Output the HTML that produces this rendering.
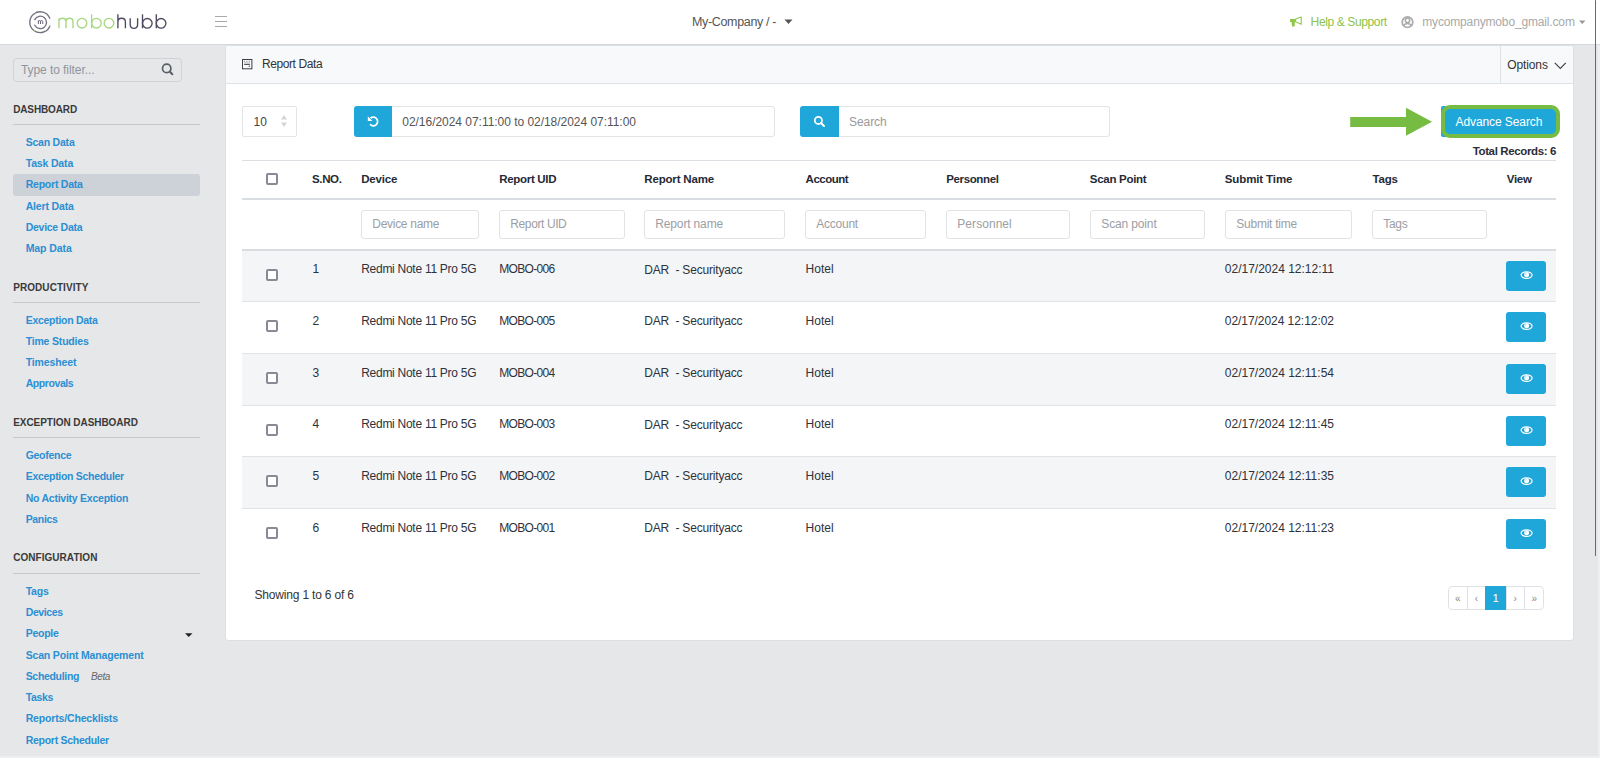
<!DOCTYPE html>
<html><head><meta charset="utf-8"><style>
*{box-sizing:border-box;margin:0;padding:0}
html,body{width:1600px;height:758px;overflow:hidden}
body{font-family:"Liberation Sans",sans-serif;background:#e6e7e9;position:relative;color:#333}
.a,.t{position:absolute}
.t{white-space:nowrap}
svg{position:absolute;overflow:visible}
</style></head><body>
<div class="a" style="left:0px;top:0px;width:1600px;height:44px;background:#fff"></div>
<div class="a" style="left:0px;top:44px;width:1600px;height:1px;background:#d5d8dd"></div>
<svg style="left:0;top:0" width="200" height="44" viewBox="0 0 200 44">
<g fill="none" stroke="#756e80" stroke-width="1.35" stroke-linecap="round">
<path d="M49.8 18.2 A10.4 10.4 0 1 0 49.8 26.2"/>
<path d="M34.8 19.6 A6.2 6.2 0 1 1 34.8 25.2"/>
</g>
<path d="M38.4 24 V20.6 M38.4 21.6 Q38.4 20.6 39.4 20.6 Q40.5 20.6 40.5 21.6 V24 M40.5 21.6 Q40.5 20.6 41.6 20.6 Q42.7 20.6 42.7 21.6 V24" fill="none" stroke="#5f5869" stroke-width="0.9"/>
<g fill="#a6d87f"><circle cx="35.5" cy="13.8" r="0.8"/><circle cx="34.8" cy="30.5" r="0.8"/><circle cx="45.3" cy="30.5" r="0.8"/></g>
<g fill="none" stroke="#a5d880" stroke-width="1.35" stroke-linecap="butt">
<path d="M59 28.3 V18.2 M59 21.8 Q59 18.2 62.5 18.2 Q66 18.2 66 21.8 V28.3 M66 21.8 Q66 18.2 69.5 18.2 Q73 18.2 73 21.8 V28.3"/>
<circle cx="82" cy="23.2" r="4.8"/>
<path d="M91.6 14.3 V28.3"/><circle cx="96.4" cy="23.2" r="4.8"/>
<circle cx="109" cy="23.2" r="4.8"/>
</g>
<g fill="none" stroke="#4f4860" stroke-width="1.35">
<path d="M117.9 14.3 V28.3 M117.9 22 Q117.9 18.2 121.6 18.2 Q125.4 18.2 125.4 22 V28.3"/>
<path d="M130.2 18.2 V24.6 Q130.2 28.4 133.9 28.4 Q137.6 28.4 137.6 24.6 V18.2"/>
<path d="M142.5 14.3 V28.3"/><circle cx="147.3" cy="23.3" r="4.8"/>
<path d="M156.3 14.3 V28.3"/><circle cx="161.1" cy="23.3" r="4.8"/>
</g>
</svg>
<div class="a" style="left:214.5px;top:16px;width:12px;height:1.2px;background:#a9a9ad"></div>
<div class="a" style="left:214.5px;top:21px;width:12px;height:1.2px;background:#a9a9ad"></div>
<div class="a" style="left:214.5px;top:26px;width:12px;height:1.2px;background:#a9a9ad"></div>
<div class="t" style="left:692px;top:16.00px;font-size:12.5px;line-height:12.5px;color:#555;font-weight:normal;letter-spacing:-0.342px;">My-Company / -</div>
<svg style="left:784px;top:19px" width="10" height="6"><path d="M0.5 0.5 H8.5 L4.5 5 Z" fill="#555"/></svg>
<svg style="left:1289px;top:16px" width="14" height="12" viewBox="0 0 14 12"><path d="M1 2.9 H6.4 V6 H5.9 L5.6 10.5 H3 L2.5 6 H1 Z" fill="#92c74e"/><path d="M6.6 3.1 L12.2 1 V8.2 L6.6 5.8 Z" fill="none" stroke="#92c74e" stroke-width="1.1" stroke-linejoin="round"/></svg>
<div class="t" style="left:1310.6px;top:16.00px;font-size:12px;line-height:12px;color:#8cc34b;font-weight:normal;letter-spacing:-0.373px;">Help &amp; Support</div>
<svg style="left:1401px;top:15.5px" width="13" height="13" viewBox="0 0 13 13"><circle cx="6.5" cy="6.2" r="5.3" fill="none" stroke="#ababab" stroke-width="1.7"/><circle cx="6.5" cy="4.5" r="2.2" fill="none" stroke="#ababab" stroke-width="1.5"/><path d="M2.6 9.6 Q3.6 7.4 6.5 7.4 Q9.4 7.4 10.4 9.6" fill="none" stroke="#ababab" stroke-width="1.5"/></svg>
<div class="t" style="left:1422.2px;top:16.00px;font-size:12px;line-height:12px;color:#a9a9a9;font-weight:normal;letter-spacing:-0.153px;">mycompanymobo_gmail.com</div>
<svg style="left:1579px;top:19.5px" width="7" height="5"><path d="M0 0.5 H6.5 L3.25 4 Z" fill="#999"/></svg>
<div class="a" style="left:13px;top:58px;width:169px;height:24px;background:#e6e7e9;border:1px solid #cfd2d6;border-radius:4px"></div>
<div class="t" style="left:21px;top:64.00px;font-size:12px;line-height:12px;color:#8f959e;font-weight:normal;letter-spacing:-0.073px;">Type to filter...</div>
<svg style="left:161px;top:63px" width="14" height="14" viewBox="0 0 14 14"><circle cx="5.7" cy="5.4" r="4.2" fill="none" stroke="#5a5e66" stroke-width="1.7"/><path d="M8.7 8.5 L11.3 11.2" stroke="#5a5e66" stroke-width="2" stroke-linecap="round"/></svg>
<div class="t" style="left:13.2px;top:105.00px;font-size:10px;line-height:10px;color:#3a3a3a;font-weight:bold;letter-spacing:-0.135px;">DASHBOARD</div>
<div class="a" style="left:13px;top:124px;width:187px;height:1px;background:#c5c8cd"></div>
<div class="a" style="left:13px;top:174px;width:187px;height:22px;background:#cdd1d8;border-radius:3px"></div>
<div class="t" style="left:25.7px;top:137.00px;font-size:10.5px;line-height:10.5px;color:#2b8fd2;font-weight:bold;letter-spacing:-0.217px;">Scan Data</div>
<div class="t" style="left:25.7px;top:158.00px;font-size:10.5px;line-height:10.5px;color:#2b8fd2;font-weight:bold;letter-spacing:-0.161px;">Task Data</div>
<div class="t" style="left:25.7px;top:179.00px;font-size:10.5px;line-height:10.5px;color:#2b8fd2;font-weight:bold;letter-spacing:-0.227px;">Report Data</div>
<div class="t" style="left:25.7px;top:201.00px;font-size:10.5px;line-height:10.5px;color:#2b8fd2;font-weight:bold;letter-spacing:-0.162px;">Alert Data</div>
<div class="t" style="left:25.7px;top:222.00px;font-size:10.5px;line-height:10.5px;color:#2b8fd2;font-weight:bold;letter-spacing:-0.269px;">Device Data</div>
<div class="t" style="left:25.7px;top:243.00px;font-size:10.5px;line-height:10.5px;color:#2b8fd2;font-weight:bold;letter-spacing:-0.091px;">Map Data</div>
<div class="t" style="left:13.2px;top:283.00px;font-size:10px;line-height:10px;color:#3a3a3a;font-weight:bold;letter-spacing:0.066px;">PRODUCTIVITY</div>
<div class="a" style="left:13px;top:302px;width:187px;height:1px;background:#c5c8cd"></div>
<div class="t" style="left:25.7px;top:315.00px;font-size:10.5px;line-height:10.5px;color:#2b8fd2;font-weight:bold;letter-spacing:-0.278px;">Exception Data</div>
<div class="t" style="left:25.7px;top:336.00px;font-size:10.5px;line-height:10.5px;color:#2b8fd2;font-weight:bold;letter-spacing:-0.184px;">Time Studies</div>
<div class="t" style="left:25.7px;top:357.00px;font-size:10.5px;line-height:10.5px;color:#2b8fd2;font-weight:bold;letter-spacing:-0.119px;">Timesheet</div>
<div class="t" style="left:25.7px;top:378.00px;font-size:10.5px;line-height:10.5px;color:#2b8fd2;font-weight:bold;letter-spacing:-0.426px;">Approvals</div>
<div class="t" style="left:13.2px;top:418.00px;font-size:10px;line-height:10px;color:#3a3a3a;font-weight:bold;letter-spacing:-0.047px;">EXCEPTION DASHBOARD</div>
<div class="a" style="left:13px;top:437px;width:187px;height:1px;background:#c5c8cd"></div>
<div class="t" style="left:25.7px;top:450.00px;font-size:10.5px;line-height:10.5px;color:#2b8fd2;font-weight:bold;letter-spacing:-0.287px;">Geofence</div>
<div class="t" style="left:25.7px;top:471.00px;font-size:10.5px;line-height:10.5px;color:#2b8fd2;font-weight:bold;letter-spacing:-0.299px;">Exception Scheduler</div>
<div class="t" style="left:25.7px;top:493.00px;font-size:10.5px;line-height:10.5px;color:#2b8fd2;font-weight:bold;letter-spacing:-0.246px;">No Activity Exception</div>
<div class="t" style="left:25.7px;top:514.00px;font-size:10.5px;line-height:10.5px;color:#2b8fd2;font-weight:bold;letter-spacing:-0.343px;">Panics</div>
<div class="t" style="left:13.2px;top:553.00px;font-size:10px;line-height:10px;color:#3a3a3a;font-weight:bold;letter-spacing:0.044px;">CONFIGURATION</div>
<div class="a" style="left:13px;top:573px;width:187px;height:1px;background:#c5c8cd"></div>
<div class="t" style="left:25.7px;top:586.00px;font-size:10.5px;line-height:10.5px;color:#2b8fd2;font-weight:bold;letter-spacing:-0.229px;">Tags</div>
<div class="t" style="left:25.7px;top:607.00px;font-size:10.5px;line-height:10.5px;color:#2b8fd2;font-weight:bold;letter-spacing:-0.376px;">Devices</div>
<div class="t" style="left:25.7px;top:628.00px;font-size:10.5px;line-height:10.5px;color:#2b8fd2;font-weight:bold;letter-spacing:-0.258px;">People</div>
<div class="t" style="left:25.7px;top:650.00px;font-size:10.5px;line-height:10.5px;color:#2b8fd2;font-weight:bold;letter-spacing:-0.168px;">Scan Point Management</div>
<div class="t" style="left:25.7px;top:671.00px;font-size:10.5px;line-height:10.5px;color:#2b8fd2;font-weight:bold;letter-spacing:-0.319px;">Scheduling</div>
<div class="t" style="left:25.7px;top:692.00px;font-size:10.5px;line-height:10.5px;color:#2b8fd2;font-weight:bold;letter-spacing:-0.338px;">Tasks</div>
<div class="t" style="left:25.7px;top:713.00px;font-size:10.5px;line-height:10.5px;color:#2b8fd2;font-weight:bold;letter-spacing:-0.163px;">Reports/Checklists</div>
<div class="t" style="left:25.7px;top:735.00px;font-size:10.5px;line-height:10.5px;color:#2b8fd2;font-weight:bold;letter-spacing:-0.269px;">Report Scheduler</div>
<div class="t" style="left:91.1px;top:672.00px;font-size:10px;line-height:10px;color:#666;font-weight:normal;letter-spacing:-0.437px;font-style:italic">Beta</div>
<svg style="left:185px;top:632.5px" width="8" height="5"><path d="M0 0.2 H7.5 L3.75 4 Z" fill="#222"/></svg>
<div class="a" style="left:225px;top:45px;width:1349px;height:596px;background:#fff;border:1px solid #dcdfe3;border-radius:3px"></div>
<div class="a" style="left:226px;top:46px;width:1347px;height:37px;background:#f8f9fb;border-radius:3px 3px 0 0"></div>
<div class="a" style="left:226px;top:83px;width:1347px;height:1px;background:#dfe2e6"></div>
<div class="a" style="left:1500px;top:46px;width:1px;height:37px;background:#dfe2e6"></div>
<svg style="left:242px;top:59px" width="11" height="11" viewBox="0 0 11 11"><rect x="0.5" y="0.5" width="9.4" height="9.3" fill="none" stroke="#3d3d48" stroke-width="1"/><path d="M2 2.3 h1 M4.4 2.3 h1 M6.8 2.3 h1" stroke="#777" stroke-width="1"/><path d="M2.2 3.9 H7.9" stroke="#aaa" stroke-width="0.8"/><path d="M2.2 5.4 H7.9" stroke="#444" stroke-width="1"/><circle cx="7.3" cy="7.3" r="0.7" fill="#555"/></svg>
<div class="t" style="left:262px;top:58.00px;font-size:12px;line-height:12px;color:#333;font-weight:normal;letter-spacing:-0.413px;">Report Data</div>
<div class="t" style="left:1507.3px;top:59.00px;font-size:12px;line-height:12px;color:#333;font-weight:normal;letter-spacing:-0.126px;">Options</div>
<svg style="left:1554px;top:62px" width="13" height="8"><path d="M0.8 0.8 L6.3 6.5 L11.8 0.8" fill="none" stroke="#444" stroke-width="1.2"/></svg>
<div class="a" style="left:242px;top:106px;width:55px;height:31px;background:#fff;border:1px solid #e3e5e9;border-radius:2px"></div>
<div class="t" style="left:253.5px;top:116.00px;font-size:12px;line-height:12px;color:#444;font-weight:normal;">10</div>
<svg style="left:280px;top:114px" width="8" height="14"><path d="M4 1 L7 5.5 H1 Z M4 13 L7 8.5 H1 Z" fill="#d4d4d4"/></svg>
<div class="a" style="left:353.5px;top:106px;width:38.5px;height:31px;background:#1fa7da;border-radius:3px 0 0 3px"></div>
<svg style="left:366px;top:114px" width="14" height="14" viewBox="0 0 14 14"><path d="M4.54 4.21 A4.3 4.3 0 1 1 4.0 10.26" fill="none" stroke="#fff" stroke-width="1.75"/><path d="M1.8 2.2 V6.9 H6.3 Z" fill="#fff"/></svg>
<div class="a" style="left:392px;top:106px;width:383px;height:31px;background:#fff;border:1px solid #e4e4e4;border-left:none;border-radius:0 3px 3px 0"></div>
<div class="t" style="left:402.3px;top:116.00px;font-size:12px;line-height:12px;color:#555;font-weight:normal;letter-spacing:-0.035px;">02/16/2024 07:11:00 to 02/18/2024 07:11:00</div>
<div class="a" style="left:800px;top:106px;width:39px;height:31px;background:#1fa7da;border-radius:3px 0 0 3px"></div>
<svg style="left:813px;top:115px" width="13" height="13" viewBox="0 0 13 13"><circle cx="5.4" cy="5.4" r="3.6" fill="none" stroke="#fff" stroke-width="1.8"/><path d="M8 8 L11 11" stroke="#fff" stroke-width="2" stroke-linecap="round"/></svg>
<div class="a" style="left:839px;top:106px;width:271px;height:31px;background:#fff;border:1px solid #e4e4e4;border-left:none;border-radius:0 3px 3px 0"></div>
<div class="t" style="left:849px;top:116.00px;font-size:12px;line-height:12px;color:#999;font-weight:normal;letter-spacing:-0.070px;">Search</div>
<svg style="left:1349px;top:106px" width="86" height="32" viewBox="0 0 86 32"><path d="M1.2 11 H57 V1.7 L83 15.8 L57 29.7 V21 H1.2 Z" fill="#76bc43"/></svg>
<div class="a" style="left:1441px;top:106px;width:115px;height:31px;background:#1fa7da;border-radius:2px"></div>
<div class="a" style="left:1440.5px;top:105.3px;width:119.5px;height:33.2px;border:4.3px solid #76bc43;border-radius:9px"></div>
<div class="t" style="left:1455.5px;top:116.00px;font-size:12px;line-height:12px;color:#fff;font-weight:normal;letter-spacing:-0.091px;">Advance Search</div>
<div class="t" style="left:1472.7px;top:146.00px;font-size:11.5px;line-height:11.5px;color:#2d2d38;font-weight:bold;letter-spacing:-0.370px;">Total Records: 6</div>
<div class="a" style="left:242px;top:160px;width:1314px;height:1px;background:#dcdee3"></div>
<div class="a" style="left:242px;top:198px;width:1314px;height:2px;background:#d9dce1"></div>
<div class="a" style="left:242px;top:249px;width:1314px;height:2px;background:#d9dce1"></div>
<div class="a" style="left:266px;top:173px;width:12px;height:12px;border:2px solid #8a8996;border-radius:2px;background:#fff"></div>
<div class="t" style="left:312px;top:174.00px;font-size:11.5px;line-height:11.5px;color:#252a36;font-weight:bold;letter-spacing:-0.354px;">S.NO.</div>
<div class="t" style="left:361.2px;top:174.00px;font-size:11.5px;line-height:11.5px;color:#252a36;font-weight:bold;letter-spacing:-0.197px;">Device</div>
<div class="t" style="left:499.2px;top:174.00px;font-size:11.5px;line-height:11.5px;color:#252a36;font-weight:bold;letter-spacing:-0.306px;">Report UID</div>
<div class="t" style="left:644.3px;top:174.00px;font-size:11.5px;line-height:11.5px;color:#252a36;font-weight:bold;letter-spacing:-0.178px;">Report Name</div>
<div class="t" style="left:805.6px;top:174.00px;font-size:11.5px;line-height:11.5px;color:#252a36;font-weight:bold;letter-spacing:-0.512px;">Account</div>
<div class="t" style="left:946.2px;top:174.00px;font-size:11.5px;line-height:11.5px;color:#252a36;font-weight:bold;letter-spacing:-0.363px;">Personnel</div>
<div class="t" style="left:1089.8px;top:174.00px;font-size:11.5px;line-height:11.5px;color:#252a36;font-weight:bold;letter-spacing:-0.288px;">Scan Point</div>
<div class="t" style="left:1224.8px;top:174.00px;font-size:11.5px;line-height:11.5px;color:#252a36;font-weight:bold;letter-spacing:-0.120px;">Submit Time</div>
<div class="t" style="left:1372.6px;top:174.00px;font-size:11.5px;line-height:11.5px;color:#252a36;font-weight:bold;letter-spacing:-0.264px;">Tags</div>
<div class="t" style="left:1506.8px;top:174.00px;font-size:11.5px;line-height:11.5px;color:#252a36;font-weight:bold;letter-spacing:-0.318px;">View</div>
<div class="a" style="left:361px;top:210px;width:118px;height:29px;background:#fff;border:1px solid #e1e3e7;border-radius:3px"></div>
<div class="t" style="left:372.3px;top:218.00px;font-size:12px;line-height:12px;color:#9b9ea4;font-weight:normal;letter-spacing:-0.286px;">Device name</div>
<div class="a" style="left:499px;top:210px;width:126px;height:29px;background:#fff;border:1px solid #e1e3e7;border-radius:3px"></div>
<div class="t" style="left:510.3px;top:218.00px;font-size:12px;line-height:12px;color:#9b9ea4;font-weight:normal;letter-spacing:-0.395px;">Report UID</div>
<div class="a" style="left:644px;top:210px;width:141px;height:29px;background:#fff;border:1px solid #e1e3e7;border-radius:3px"></div>
<div class="t" style="left:655.3px;top:218.00px;font-size:12px;line-height:12px;color:#9b9ea4;font-weight:normal;letter-spacing:-0.150px;">Report name</div>
<div class="a" style="left:805px;top:210px;width:121px;height:29px;background:#fff;border:1px solid #e1e3e7;border-radius:3px"></div>
<div class="t" style="left:816.3px;top:218.00px;font-size:12px;line-height:12px;color:#9b9ea4;font-weight:normal;letter-spacing:-0.254px;">Account</div>
<div class="a" style="left:946px;top:210px;width:124px;height:29px;background:#fff;border:1px solid #e1e3e7;border-radius:3px"></div>
<div class="t" style="left:957.3px;top:218.00px;font-size:12px;line-height:12px;color:#9b9ea4;font-weight:normal;letter-spacing:0.054px;">Personnel</div>
<div class="a" style="left:1090px;top:210px;width:115px;height:29px;background:#fff;border:1px solid #e1e3e7;border-radius:3px"></div>
<div class="t" style="left:1101.3px;top:218.00px;font-size:12px;line-height:12px;color:#9b9ea4;font-weight:normal;letter-spacing:-0.141px;">Scan point</div>
<div class="a" style="left:1225px;top:210px;width:127px;height:29px;background:#fff;border:1px solid #e1e3e7;border-radius:3px"></div>
<div class="t" style="left:1236.3px;top:218.00px;font-size:12px;line-height:12px;color:#9b9ea4;font-weight:normal;letter-spacing:-0.248px;">Submit time</div>
<div class="a" style="left:1372px;top:210px;width:115px;height:29px;background:#fff;border:1px solid #e1e3e7;border-radius:3px"></div>
<div class="t" style="left:1383.3px;top:218.00px;font-size:12px;line-height:12px;color:#9b9ea4;font-weight:normal;letter-spacing:-0.316px;">Tags</div>
<div class="a" style="left:242px;top:251px;width:1314px;height:50px;background:#f4f5f7"></div>
<div class="a" style="left:242px;top:301px;width:1314px;height:1px;background:#e1e3e7"></div>
<div class="a" style="left:266px;top:269px;width:12px;height:12px;border:2px solid #8a8996;border-radius:2px;background:#fff"></div>
<div class="t" style="left:312.5px;top:263.00px;font-size:12px;line-height:12px;color:#2e323a;font-weight:normal;">1</div>
<div class="t" style="left:361.2px;top:263.00px;font-size:12px;line-height:12px;color:#2e323a;font-weight:normal;letter-spacing:-0.272px;">Redmi Note 11 Pro 5G</div>
<div class="t" style="left:499.2px;top:263.00px;font-size:12px;line-height:12px;color:#2e323a;font-weight:normal;letter-spacing:-0.673px;">MOBO-006</div>
<div class="t" style="left:644.3px;top:264.00px;font-size:12px;line-height:12px;color:#2e323a;font-weight:normal;letter-spacing:-0.180px;">DAR&nbsp; - Securityacc</div>
<div class="t" style="left:805.6px;top:263.00px;font-size:12px;line-height:12px;color:#2e323a;font-weight:normal;letter-spacing:0.013px;">Hotel</div>
<div class="t" style="left:1224.8px;top:263.00px;font-size:12px;line-height:12px;color:#2e323a;font-weight:normal;letter-spacing:-0.002px;">02/17/2024 12:12:11</div>
<div class="a" style="left:1506px;top:261px;width:40px;height:30px;background:#1fa7da;border-radius:3px"></div>
<svg style="left:1520px;top:271px" width="13" height="9" viewBox="0 0 13 9"><ellipse cx="6.6" cy="4.1" rx="5.5" ry="3.3" fill="none" stroke="#fff" stroke-width="1.2"/><circle cx="6.6" cy="3.7" r="2.5" fill="#fff"/><circle cx="5.7" cy="2.9" r="0.7" fill="#8fd3ee"/></svg>
<div class="a" style="left:242px;top:353px;width:1314px;height:1px;background:#e1e3e7"></div>
<div class="a" style="left:266px;top:320px;width:12px;height:12px;border:2px solid #8a8996;border-radius:2px;background:#fff"></div>
<div class="t" style="left:312.5px;top:315.00px;font-size:12px;line-height:12px;color:#2e323a;font-weight:normal;">2</div>
<div class="t" style="left:361.2px;top:315.00px;font-size:12px;line-height:12px;color:#2e323a;font-weight:normal;letter-spacing:-0.272px;">Redmi Note 11 Pro 5G</div>
<div class="t" style="left:499.2px;top:315.00px;font-size:12px;line-height:12px;color:#2e323a;font-weight:normal;letter-spacing:-0.673px;">MOBO-005</div>
<div class="t" style="left:644.3px;top:315.00px;font-size:12px;line-height:12px;color:#2e323a;font-weight:normal;letter-spacing:-0.180px;">DAR&nbsp; - Securityacc</div>
<div class="t" style="left:805.6px;top:315.00px;font-size:12px;line-height:12px;color:#2e323a;font-weight:normal;letter-spacing:0.013px;">Hotel</div>
<div class="t" style="left:1224.8px;top:315.00px;font-size:12px;line-height:12px;color:#2e323a;font-weight:normal;letter-spacing:-0.052px;">02/17/2024 12:12:02</div>
<div class="a" style="left:1506px;top:312px;width:40px;height:30px;background:#1fa7da;border-radius:3px"></div>
<svg style="left:1520px;top:322px" width="13" height="9" viewBox="0 0 13 9"><ellipse cx="6.6" cy="4.1" rx="5.5" ry="3.3" fill="none" stroke="#fff" stroke-width="1.2"/><circle cx="6.6" cy="3.7" r="2.5" fill="#fff"/><circle cx="5.7" cy="2.9" r="0.7" fill="#8fd3ee"/></svg>
<div class="a" style="left:242px;top:354px;width:1314px;height:51px;background:#f4f5f7"></div>
<div class="a" style="left:242px;top:405px;width:1314px;height:1px;background:#e1e3e7"></div>
<div class="a" style="left:266px;top:372px;width:12px;height:12px;border:2px solid #8a8996;border-radius:2px;background:#fff"></div>
<div class="t" style="left:312.5px;top:367.00px;font-size:12px;line-height:12px;color:#2e323a;font-weight:normal;">3</div>
<div class="t" style="left:361.2px;top:367.00px;font-size:12px;line-height:12px;color:#2e323a;font-weight:normal;letter-spacing:-0.272px;">Redmi Note 11 Pro 5G</div>
<div class="t" style="left:499.2px;top:367.00px;font-size:12px;line-height:12px;color:#2e323a;font-weight:normal;letter-spacing:-0.673px;">MOBO-004</div>
<div class="t" style="left:644.3px;top:367.00px;font-size:12px;line-height:12px;color:#2e323a;font-weight:normal;letter-spacing:-0.180px;">DAR&nbsp; - Securityacc</div>
<div class="t" style="left:805.6px;top:367.00px;font-size:12px;line-height:12px;color:#2e323a;font-weight:normal;letter-spacing:0.013px;">Hotel</div>
<div class="t" style="left:1224.8px;top:367.00px;font-size:12px;line-height:12px;color:#2e323a;font-weight:normal;letter-spacing:-0.002px;">02/17/2024 12:11:54</div>
<div class="a" style="left:1506px;top:364px;width:40px;height:30px;background:#1fa7da;border-radius:3px"></div>
<svg style="left:1520px;top:374px" width="13" height="9" viewBox="0 0 13 9"><ellipse cx="6.6" cy="4.1" rx="5.5" ry="3.3" fill="none" stroke="#fff" stroke-width="1.2"/><circle cx="6.6" cy="3.7" r="2.5" fill="#fff"/><circle cx="5.7" cy="2.9" r="0.7" fill="#8fd3ee"/></svg>
<div class="a" style="left:242px;top:456px;width:1314px;height:1px;background:#e1e3e7"></div>
<div class="a" style="left:266px;top:424px;width:12px;height:12px;border:2px solid #8a8996;border-radius:2px;background:#fff"></div>
<div class="t" style="left:312.5px;top:418.00px;font-size:12px;line-height:12px;color:#2e323a;font-weight:normal;">4</div>
<div class="t" style="left:361.2px;top:418.00px;font-size:12px;line-height:12px;color:#2e323a;font-weight:normal;letter-spacing:-0.272px;">Redmi Note 11 Pro 5G</div>
<div class="t" style="left:499.2px;top:418.00px;font-size:12px;line-height:12px;color:#2e323a;font-weight:normal;letter-spacing:-0.673px;">MOBO-003</div>
<div class="t" style="left:644.3px;top:419.00px;font-size:12px;line-height:12px;color:#2e323a;font-weight:normal;letter-spacing:-0.180px;">DAR&nbsp; - Securityacc</div>
<div class="t" style="left:805.6px;top:418.00px;font-size:12px;line-height:12px;color:#2e323a;font-weight:normal;letter-spacing:0.013px;">Hotel</div>
<div class="t" style="left:1224.8px;top:418.00px;font-size:12px;line-height:12px;color:#2e323a;font-weight:normal;letter-spacing:-0.002px;">02/17/2024 12:11:45</div>
<div class="a" style="left:1506px;top:416px;width:40px;height:30px;background:#1fa7da;border-radius:3px"></div>
<svg style="left:1520px;top:426px" width="13" height="9" viewBox="0 0 13 9"><ellipse cx="6.6" cy="4.1" rx="5.5" ry="3.3" fill="none" stroke="#fff" stroke-width="1.2"/><circle cx="6.6" cy="3.7" r="2.5" fill="#fff"/><circle cx="5.7" cy="2.9" r="0.7" fill="#8fd3ee"/></svg>
<div class="a" style="left:242px;top:457px;width:1314px;height:51px;background:#f4f5f7"></div>
<div class="a" style="left:242px;top:508px;width:1314px;height:1px;background:#e1e3e7"></div>
<div class="a" style="left:266px;top:475px;width:12px;height:12px;border:2px solid #8a8996;border-radius:2px;background:#fff"></div>
<div class="t" style="left:312.5px;top:470.00px;font-size:12px;line-height:12px;color:#2e323a;font-weight:normal;">5</div>
<div class="t" style="left:361.2px;top:470.00px;font-size:12px;line-height:12px;color:#2e323a;font-weight:normal;letter-spacing:-0.272px;">Redmi Note 11 Pro 5G</div>
<div class="t" style="left:499.2px;top:470.00px;font-size:12px;line-height:12px;color:#2e323a;font-weight:normal;letter-spacing:-0.673px;">MOBO-002</div>
<div class="t" style="left:644.3px;top:470.00px;font-size:12px;line-height:12px;color:#2e323a;font-weight:normal;letter-spacing:-0.180px;">DAR&nbsp; - Securityacc</div>
<div class="t" style="left:805.6px;top:470.00px;font-size:12px;line-height:12px;color:#2e323a;font-weight:normal;letter-spacing:0.013px;">Hotel</div>
<div class="t" style="left:1224.8px;top:470.00px;font-size:12px;line-height:12px;color:#2e323a;font-weight:normal;letter-spacing:-0.002px;">02/17/2024 12:11:35</div>
<div class="a" style="left:1506px;top:467px;width:40px;height:30px;background:#1fa7da;border-radius:3px"></div>
<svg style="left:1520px;top:477px" width="13" height="9" viewBox="0 0 13 9"><ellipse cx="6.6" cy="4.1" rx="5.5" ry="3.3" fill="none" stroke="#fff" stroke-width="1.2"/><circle cx="6.6" cy="3.7" r="2.5" fill="#fff"/><circle cx="5.7" cy="2.9" r="0.7" fill="#8fd3ee"/></svg>
<div class="a" style="left:266px;top:527px;width:12px;height:12px;border:2px solid #8a8996;border-radius:2px;background:#fff"></div>
<div class="t" style="left:312.5px;top:522.00px;font-size:12px;line-height:12px;color:#2e323a;font-weight:normal;">6</div>
<div class="t" style="left:361.2px;top:522.00px;font-size:12px;line-height:12px;color:#2e323a;font-weight:normal;letter-spacing:-0.272px;">Redmi Note 11 Pro 5G</div>
<div class="t" style="left:499.2px;top:522.00px;font-size:12px;line-height:12px;color:#2e323a;font-weight:normal;letter-spacing:-0.673px;">MOBO-001</div>
<div class="t" style="left:644.3px;top:522.00px;font-size:12px;line-height:12px;color:#2e323a;font-weight:normal;letter-spacing:-0.180px;">DAR&nbsp; - Securityacc</div>
<div class="t" style="left:805.6px;top:522.00px;font-size:12px;line-height:12px;color:#2e323a;font-weight:normal;letter-spacing:0.013px;">Hotel</div>
<div class="t" style="left:1224.8px;top:522.00px;font-size:12px;line-height:12px;color:#2e323a;font-weight:normal;letter-spacing:-0.002px;">02/17/2024 12:11:23</div>
<div class="a" style="left:1506px;top:519px;width:40px;height:30px;background:#1fa7da;border-radius:3px"></div>
<svg style="left:1520px;top:529px" width="13" height="9" viewBox="0 0 13 9"><ellipse cx="6.6" cy="4.1" rx="5.5" ry="3.3" fill="none" stroke="#fff" stroke-width="1.2"/><circle cx="6.6" cy="3.7" r="2.5" fill="#fff"/><circle cx="5.7" cy="2.9" r="0.7" fill="#8fd3ee"/></svg>
<div class="t" style="left:254.5px;top:589.00px;font-size:12px;line-height:12px;color:#333;font-weight:normal;letter-spacing:-0.181px;">Showing 1 to 6 of 6</div>
<div class="a" style="left:1448px;top:586px;width:96px;height:24px;background:#fff;border:1px solid #dee2e6;border-radius:4px"></div>
<div class="a" style="left:1467px;top:587px;width:1px;height:22px;background:#dee2e6"></div>
<div class="a" style="left:1485px;top:587px;width:1px;height:22px;background:#dee2e6"></div>
<div class="a" style="left:1506px;top:587px;width:1px;height:22px;background:#dee2e6"></div>
<div class="a" style="left:1523.5px;top:587px;width:1px;height:22px;background:#dee2e6"></div>
<div class="a" style="left:1485px;top:586px;width:21px;height:24px;background:#1fa7da"></div>
<div class="t" style="left:1455px;top:594.00px;font-size:10px;line-height:10px;color:#8a8a8a;font-weight:normal;">&laquo;</div>
<div class="t" style="left:1474.8px;top:594.00px;font-size:10px;line-height:10px;color:#8a8a8a;font-weight:normal;">&lsaquo;</div>
<div class="t" style="left:1492.5px;top:593.00px;font-size:11.5px;line-height:11.5px;color:#fff;font-weight:normal;">1</div>
<div class="t" style="left:1513.5px;top:594.00px;font-size:10px;line-height:10px;color:#8a8a8a;font-weight:normal;">&rsaquo;</div>
<div class="t" style="left:1531.4px;top:594.00px;font-size:10px;line-height:10px;color:#8a8a8a;font-weight:normal;">&raquo;</div>
<div class="a" style="left:1594.8px;top:0px;width:1.6px;height:556px;background:#6a6a6a;border-radius:1px"></div>
<div class="a" style="left:1598px;top:45px;width:2px;height:713px;background:#eeeff1"></div>
<div class="a" style="left:0px;top:756px;width:1600px;height:2px;background:#eeeff1"></div>
</body></html>
